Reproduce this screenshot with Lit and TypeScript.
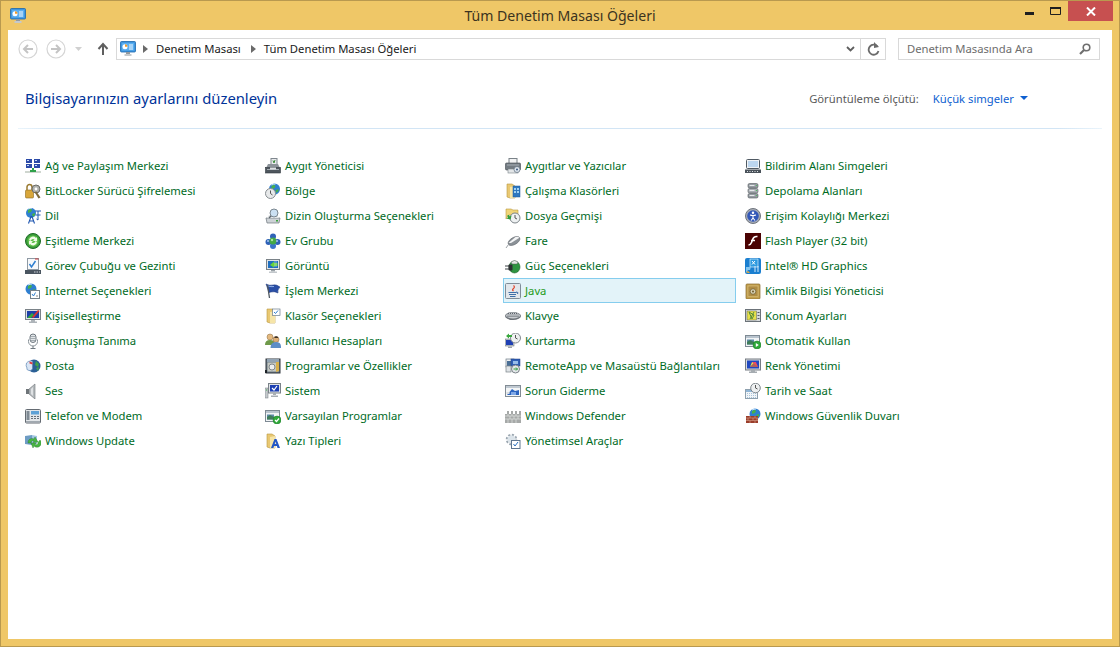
import { LitElement, html, css, svg } from "lit";
import { customElement } from "lit/decorators.js";

const globe = (cx = 8, cy = 6, r = 5) => svg`<circle cx=${cx} cy=${cy} r=${r} fill="#2f7fd0"/><path d="M${cx - 3} ${cy - 3}q3-2 4 0l-1 2-3 1zM${cx + 1} ${cy + 1}l3-1 0 2-2 2z" fill="#46b04a"/><path d="M${cx - 3} ${cy - 4}q2-1 4-1" stroke="#cfe8fb" fill="none"/>`;
const folder = svg`<path d="M2 1h5l3 2v12H5l-3-1z" fill="#e9c872" stroke="#b8973f" stroke-width=".6"/><path d="M5 4l5-1v12H5z" fill="#f6e5a8"/>`;
const monitor = (screen: string) => svg`<rect x="1.5" y="1.5" width="13" height="10" fill="#dfe3e6" stroke="#7a8288"/><rect x="3" y="3" width="10" height="7" fill=${screen}/><path d="M6 12h4v1.5H6z" fill="#9aa2a8"/><path d="M4 13.5h8V15H4z" fill="#c3c8cc"/>`;
const win = svg`<rect x=".5" y="2.5" width="14" height="11" fill="#f2f4f6" stroke="#7e8a94"/><path d="M1 3h13v2H1z" fill="#b9c4ce"/><path d="M2 6.5h7v5H2z" fill="#5d8aa8"/><path d="M2 9l3-2 4 2v2.500H2z" fill="#3f7d5a"/>`;

const icons: Record<string, unknown> = {
  ag: svg`<rect x="1" y="1" width="6" height="4" fill="#2b4aa8"/><rect x="9" y="1" width="6" height="4" fill="#2b4aa8"/><rect x="1" y="6" width="6" height="4" fill="#2b4aa8"/><rect x="9" y="6" width="6" height="4" fill="#2b4aa8"/><path d="M2 2h2v1H2zM10 2h2v1h-2zM2 7h2v1H2zM10 7h2v1h-2z" fill="#c6d8f5"/><path d="M0 13h16v2H0z" fill="#cfd6cf"/><path d="M7 10h2v3H7z M5 12h6v2H5z" fill="#2fa14a"/>`,
  bit: svg`<rect x="0.500" y="7" width="8" height="8" rx="1" fill="#d8a63a" stroke="#8a6a20" stroke-width=".6"/><path d="M2 7V4a2.500 2.500 0 0 1 5 0V7" fill="none" stroke="#9a7a30" stroke-width="1.500"/><circle cx="11" cy="6" r="4" fill="#b0b2ae" stroke="#6d6d68"/><circle cx="11" cy="6" r="1.400" fill="#fff"/><path d="M9.500 9l4 6.500 2-1-4-6z" fill="#7d6a3a"/>`,
  dil: svg`${globe(6, 5, 5)}<path d="M3.500 15.500l2.500-7h1l2.500 7M5 13h3.500" stroke="#1f56b0" stroke-width="1.100" fill="none"/><path d="M10 3h6M13 3v9l-1.500-1M10.500 7h5" stroke="#1f56b0" fill="none"/>`,
  esit: svg`<circle cx="8" cy="8" r="7.500" fill="#3a9d3a" stroke="#1c6b24"/><circle cx="8" cy="8" r="5.500" fill="#62c04c"/><path d="M4 7a4 4 0 0 1 7-2l1-1v4H8l1.500-1.500A2.500 2.500 0 0 0 5.500 8zM12 9a4 4 0 0 1-7 2l-1 1V8h4L6.500 9.500A2.500 2.500 0 0 0 10.500 8z" fill="#f0fbe8"/>`,
  gorev: svg`<rect x="2.500" y=".5" width="11" height="11" fill="#f7f9fb" stroke="#8e99a3"/><path d="M4.500 6l2 3 4-6" stroke="#2f7fd0" stroke-width="1.500" fill="none"/><path d="M10 .5h3.500v1H10z" fill="#c83a3a"/><rect x="0" y="12" width="16" height="4" fill="#4a5560"/><path d="M9 13.500h1.500v1H9zM11.500 13.500H13v1h-1.500zM14 13.500h1v1h-1z" fill="#cdd4da"/>`,
  inet: svg`${globe(6, 6, 5.500)}<rect x="5.500" y="7.500" width="9" height="8" fill="#fff" stroke="#76828c"/><path d="M7 11l1.500 2 2-3.500" stroke="#2f7fd0" fill="none"/><path d="M11 13h2" stroke="#888"/>`,
  kisi: svg`<rect x=".5" y="1.500" width="15" height="10" fill="#dfe3e6" stroke="#7a8288"/><rect x="2" y="3" width="12" height="7" fill="#1f3fa8"/><path d="M2 10l5-5 2 2-3 3z" fill="#32a83c"/><path d="M7 9l6-7 1.500 1-6 7z" fill="#d8352f"/><path d="M6 12h4v1.500H6zM4 13.500h8V15H4z" fill="#aeb4b9"/>`,
  konus: svg`<rect x="5" y="1" width="6" height="8.500" rx="3" fill="#e4e7ea" stroke="#6f7880"/><path d="M5.500 3.500h5M5.500 5.500h5M5.500 7.500h5" stroke="#8a939a" stroke-width=".7"/><path d="M3.500 6.500v2a4.500 4.500 0 0 0 9 0v-2" fill="none" stroke="#8a939a"/><path d="M8 13v2M5.500 15.500h5" stroke="#6f7880"/>`,
  posta: svg`<circle cx="9" cy="8" r="6.500" fill="#2a5f96"/><path d="M11 3l3 3-1 3-3-2zM11 10l3-1-1 4z" fill="#3fa34a"/><path d="M1.500 5q1.500-2 4-2h2v8q-2 3-5 1-1-1-.5-2-1.500-2-.500-5z" fill="#d9e6f5" stroke="#5f86b5" stroke-width=".7"/><path d="M4.500 3.500l3 1v2l-3-1z" fill="#e33b3b"/>`,
  ses: svg`<path d="M1 6h3v5H1z" fill="#6e7478"/><path d="M4 6l6-5v15l-6-5z" fill="#b4b9bc" stroke="#70767a" stroke-width=".6"/><path d="M6 6l2-2v9l-2-2z" fill="#dfe2e4"/>`,
  tel: svg`<rect x=".5" y="1.500" width="15" height="13.500" rx="1" fill="#e3e6e9" stroke="#646b72"/><rect x="1.500" y="3" width="3" height="9" fill="#7f8a94"/><rect x="6" y="3" width="8" height="3.500" fill="#5ea1d6"/><path d="M6 8h2v1H6zM9 8h2v1H9zM12 8h2v1h-2zM6 10h2v1H6zM9 10h2v1H9zM12 10h2v1h-2z" fill="#66707a"/><path d="M1 13h14v1.500H1z" fill="#a1a9b0"/>`,
  wu: svg`<path d="M0 3l7-1v10l-7-1z" fill="#6e9cc4"/><path d="M7 2l5 1v8l-5 1z" fill="#a3c6e2"/><path d="M3 10a4 4 0 0 1 6-4l1-2 3 5-5 .5 1-1.500a2 2 0 0 0-3 2z" fill="#4ab543" stroke="#237a2a" stroke-width=".4"/><path d="M15 7a4 4 0 0 1-6 6l-1 2-2-5 5 0-1 1.500a2 2 0 0 0 3-2z" fill="#4ab543" stroke="#237a2a" stroke-width=".4"/>`,

  aygit: svg`<rect x="6" y="0.500" width="6" height="7" fill="#e8eaec" stroke="#7f878e"/><path d="M8 2.500l1 2.500 1-3" stroke="#3a8a3a" fill="none"/><path d="M3 6h10l2 4H1z" fill="#8b9298"/><rect x=".5" y="9.500" width="15" height="5.500" fill="#4e565d" stroke="#333a40" stroke-width=".6"/><path d="M2 11h12v1H2z" fill="#a5acb2"/><path d="M5 9.500h6v2H5z" fill="#dde0e3"/>`,
  bolge: svg`${globe(9.500, 6, 5.500)}<circle cx="5.500" cy="10.500" r="5" fill="#e7e9ea" stroke="#868c90"/><path d="M5.500 7.500v3l2 1.500" stroke="#555" fill="none"/>`,
  dizin: svg`<path d="M1 10h14l-1 5H2z" fill="#cdd2d6" stroke="#6d757c" stroke-width=".7"/><path d="M2 10l2-3h8l2 3z" fill="#e4e7e9"/><circle cx="9" cy="5" r="4" fill="#cbe0f2" stroke="#7b8790"/><path d="M6 8l-2 2" stroke="#5d666d" stroke-width="1.500"/><rect x="11" y="12" width="2" height="1.500" fill="#3aa03a"/>`,
  ev: svg`<circle cx="3.500" cy="9" r="3" fill="#2f62b8"/><circle cx="12.500" cy="9" r="3" fill="#2f62b8"/><circle cx="8" cy="13" r="3" fill="#3b74cc"/><circle cx="8" cy="3.500" r="3" fill="#2f62b8"/><circle cx="8" cy="8" r="3.500" fill="#43a947"/><circle cx="7" cy="7" r="1.200" fill="#a9e4a0"/><circle cx="3" cy="8" r="1" fill="#a8c6f2"/><circle cx="12" cy="8" r="1" fill="#a8c6f2"/>`,
  goruntu: svg`${monitor("#1f6fc0")}<path d="M3.500 5H7V3.500L11 7 7 9.500V8H3.500z" transform="matrix(-1 0 0 1 16 0)" fill="#69d23b"/><path d="M9 4h3M9 6h3M9 8h3" stroke="#cfe4f7" stroke-width=".6"/>`,
  islem: svg`<path d="M1 1q4 2 7 1t7 2q-3 3-2 6-4-2-7-1l-2 .5z" fill="#2a4fa6" stroke="#1b3478" stroke-width=".5"/><path d="M3 3q3 1 6 .5" stroke="#8fb0ea" fill="none"/><path d="M2.500 2l2 13" stroke="#4c5660" stroke-width="1.300"/>`,
  klasor: svg`${folder}<rect x="7.500" y="1" width="7.500" height="6.500" fill="#fff" stroke="#6a7c8c" stroke-width=".7"/><path d="M9 4l1.500 1.500L13 2.500" stroke="#2f7fd0" fill="none"/>`,
  kull: svg`<circle cx="5" cy="4" r="3" fill="#e4b97f" stroke="#8a6a3f" stroke-width=".5"/><path d="M0 12q0-5 5-5t5 5z" fill="#6f9a4a"/><circle cx="11" cy="6.500" r="3" fill="#dcae76" stroke="#7c5c3a" stroke-width=".5"/><path d="M5.500 15q0-6 5.500-6t5 6z" fill="#5d8ec7"/><path d="M9.500 4q1.500-1.500 3.500 0v1h-3.500z" fill="#3e3024"/>`,
  prog: svg`<rect x="1" y="1" width="14" height="14" fill="#6d7a86" stroke="#30363c"/><path d="M2 1h12v3H2z" fill="#93a4b3"/><rect x="2.500" y="4.500" width="11" height="9" fill="#c6c9c2"/><circle cx="7" cy="9" r="3" fill="#edefef" stroke="#7f868a"/><path d="M11 4h3v9l-3 1z" fill="#d8b04a"/><path d="M0 12h2v3H0z" fill="#1d2226"/>`,
  sistem: svg`<rect x="0" y="5" width="3" height="10" fill="#c5c9cc" stroke="#757c82" stroke-width=".5"/><path d="M1 7h1" stroke="#3bb34a"/><rect x="3.500" y=".5" width="12" height="9.500" fill="#dfe3e6" stroke="#7a8288"/><rect x="5" y="2" width="9" height="6.500" fill="#1c3fb3"/><path d="M7 5l2 2 3-4" stroke="#fff" stroke-width="1.200" fill="none"/><path d="M8 10h3v2H8zM6 12.500h7V14H6z" fill="#a8aeb3"/>`,
  vars: svg`${win}<circle cx="12" cy="12" r="4" fill="#2fa83a" stroke="#1d7a28" stroke-width=".5"/><path d="M10 12l1.500 1.500L14 10.500" stroke="#fff" stroke-width="1.200" fill="none"/>`,
  yazi: svg`${folder}<path d="M6 15l3.500-9h2l3.500 9h-2.500l-.6-2H9l-.6 2zM9.700 11h1.600l-.8-2.500z" fill="#2457c5"/>`,

  yazici: svg`<rect x="4" y="0.500" width="8" height="5" fill="#f2f3f4" stroke="#7a8288"/><rect x=".5" y="5" width="15" height="7" rx="1" fill="#737b82" stroke="#40474d" stroke-width=".6"/><path d="M2 6.500h12v1H2z" fill="#a9b0b6"/><rect x="3" y="11" width="10" height="4" fill="#e3e6e8" stroke="#7a8288" stroke-width=".6"/><circle cx="12" cy="11.500" r="3" fill="#dfe6ee" stroke="#5a6a7a" stroke-width=".7"/><circle cx="12" cy="11.500" r="1" fill="#3c5a80"/>`,
  calisma: svg`${folder}<rect x="8" y="3" width="7" height="11" fill="#2f78c0" stroke="#1d5a9a" stroke-width=".5"/><path d="M9 5h2v2H9zM12 5h2v2h-2zM9 8h2v2H9zM12 8h2v2h-2z" fill="#9fd0f3"/>`,
  dosya: svg`<path d="M1 1h5l2 1h5v5H4l-3 4z" fill="#f0d478" stroke="#b8973f" stroke-width=".6"/><circle cx="10" cy="10" r="5" fill="#eef1f2" stroke="#7c8489"/><path d="M10 7v3l2 1" stroke="#555" fill="none"/><path d="M1 9l3 3 3-3H5V7H3v2z" fill="#2f9c3a" transform="rotate(-30 4 9)"/>`,
  fare: svg`<ellipse cx="9" cy="8" rx="6.500" ry="3.500" transform="rotate(-30 9 8)" fill="#8b9197" stroke="#62686e" stroke-width=".6"/><path d="M3.500 10l7-6q3.500-1 3.500 1l-8 5z" fill="#f3f4f5"/><path d="M3.500 11.500L1 15" stroke="#9aa0a5"/>`,
  guc: svg`<ellipse cx="9.500" cy="9" rx="5.500" ry="6" fill="#2e9440" stroke="#1c5f28" stroke-width=".6"/><path d="M6 4q3.500-3 7 0l-1 2h-5z" fill="#e4e8e4" stroke="#575e58" stroke-width=".5"/><path d="M0 8h5M0 11h5" stroke="#3f4448" stroke-width="1.200"/><rect x="3.500" y="6.500" width="4" height="6" rx="1" fill="#2c3033"/>`,
  java: svg`<rect x=".5" y=".5" width="15" height="15" rx="1" fill="#e2e7ec" stroke="#7f8c98"/><path d="M8.500 2.500q2 1.500-.500 3.500-1 1 .500 2" fill="none" stroke="#e0452c" stroke-width="1.200"/><path d="M3.500 9.500h8M4 11.500h7M5 13.500h5.500" stroke="#3e6fa8"/><path d="M11 9q3 0 1.500 2" stroke="#3e6fa8" fill="none"/>`,
  klavye: svg`<ellipse cx="8" cy="8" rx="8" ry="4" fill="#6d7379"/><ellipse cx="8" cy="7.500" rx="7" ry="3" fill="#c8ccd0"/><path d="M3 5.500h10M2.500 7h11M2.500 8.500h11" stroke="#5c6369" stroke-dasharray="1 1"/>`,
  kurt: svg`<rect x="0" y="6" width="9" height="7" fill="#c4cad0" stroke="#5b646c" stroke-width=".5"/><rect x="1" y="7" width="7" height="5" fill="#1e3fb4"/><path d="M3 13.500h4V15H3z" fill="#9ea4a9"/><circle cx="10.500" cy="5" r="5" fill="#eef0f0" stroke="#838a8f"/><path d="M10.500 2v3l2 1" stroke="#555" fill="none"/><path d="M1 3l3-2.500V2h3v2H4v1.500z" fill="#38a83c"/>`,
  remote: svg`<rect x="1" y="1" width="8" height="8" fill="#eef1f3" stroke="#6d7a86" stroke-width=".7"/><rect x="2" y="3" width="6" height="5" fill="#4a6f96"/><rect x="6" y="1" width="9" height="7" fill="#2f5fb5" stroke="#1d3f86" stroke-width=".5"/><path d="M8 3h5v3H8z" fill="#96bdea"/><rect x="1" y="8" width="5" height="6" fill="#dfe3e6" stroke="#7a8288" stroke-width=".7"/><circle cx="10.500" cy="11" r="4" fill="#e4e7ea" stroke="#7a8288"/><path d="M8.500 11h4M11 9.500l1.500 1.500-1.500 1.500" stroke="#2f9c3a" fill="none"/>`,
  sorun: svg`<rect x=".5" y="2.500" width="15" height="11" fill="#f3f5f6" stroke="#828c95"/><path d="M1 3h14v2H1z" fill="#c0c9d1"/><path d="M2 12l5-6 3 2 4-1v5z" fill="#2c64c0"/><path d="M6 12V9h5v3z" fill="#7fa8e6"/><path d="M1.500 9h3v2h-3z" fill="#d8dce0"/>`,
  def: svg`<path d="M0 6h2V3h2v3h2V3h2v3h2V3h2v3h2V3h2v12H0z" fill="#a6a9a8"/><path d="M0 8h16M0 11h16M3 6v2M7 6v2M11 6v2M5 8v3M9 8v3M13 8v3M3 11v4M7 11v4M11 11v4" stroke="#e0e2e1" stroke-width=".7"/>`,
  yon: svg`<circle cx="6.500" cy="6.500" r="4.500" fill="none" stroke="#9aa6b0" stroke-width="2.500" stroke-dasharray="2 1.500"/><circle cx="6.500" cy="6.500" r="4" fill="#dce4ea"/><rect x="6.500" y="7.500" width="8.500" height="8" fill="#fff" stroke="#5f7690"/><path d="M8.500 11l1.500 2 3-4" stroke="#2a6fc0" fill="none"/>`,

  bildirim: svg`<rect x="1.500" y="1.500" width="13" height="9" rx="1" fill="#f0f3f6" stroke="#505a63"/><rect x="3" y="3" width="10" height="6" fill="#bcd6ef"/><rect x="0" y="11.500" width="16" height="3.500" fill="#4a525a"/><path d="M2 13h1v1H2zM4.500 13h1v1h-1zM7 13h1v1H7zM9.500 13h1v1h-1zM12 13h1v1h-1z" fill="#dde2e6"/>`,
  depo: svg`<rect x="3" y=".5" width="10" height="4.500" rx="1.500" fill="#969ca2" stroke="#50575d" stroke-width=".6"/><rect x="3" y="5.500" width="10" height="4.500" rx="1.500" fill="#a8adb2" stroke="#50575d" stroke-width=".6"/><rect x="3" y="10.500" width="10" height="4.500" rx="1.500" fill="#969ca2" stroke="#50575d" stroke-width=".6"/><path d="M4.500 2.500h5M4.500 7.500h5M4.500 12.500h5" stroke="#e5e8ea"/><path d="M11 2.500h1M11 7.500h1M11 12.500h1" stroke="#4fc060"/>`,
  erisim: svg`<circle cx="8" cy="8" r="7.500" fill="#a8adb6" stroke="#6f757e"/><circle cx="8" cy="8" r="5.800" fill="#3358b8"/><circle cx="8" cy="4.800" r="1.200" fill="#fff"/><path d="M5 7q3 1 6 0M8 7.500V10l-2 2.500M8 10l2 2.500" stroke="#fff" stroke-width="1.100" fill="none"/>`,
  flash: svg`<rect width="16" height="16" fill="#4b0303"/><path d="M12.500 3.500q-4-.5-5 3.500l-1 2.500q-1 2.500-3 2.500M6 7.500h4" stroke="#fff" stroke-width="1.600" fill="none"/>`,
  intel: svg`<rect width="16" height="16" rx="2" fill="#1a7fd0"/><rect x="5" y="1" width="8" height="8" fill="#2d9ae0" stroke="#d7eefc" stroke-width=".7"/><path d="M7 3l3 3.500M10 3L7 6.500" stroke="#fff"/><path d="M9 9h5M9 11h5M9 13h5" stroke="#d6ecfb" stroke-dasharray="2 1"/><path d="M1 9h5l-1 3h-2l-2 3z" fill="#84c5ef"/><path d="M1 14l2 1h2l-2-2z" fill="#e6a93a"/>`,
  kimlik: svg`<rect x="1" y="1" width="14" height="15" rx="1" fill="#c3a04f" stroke="#86692c" stroke-width=".7"/><rect x="3" y="3" width="10" height="10.500" fill="#b08d45" stroke="#e3cc8a" stroke-width=".5"/><circle cx="8" cy="8.500" r="2.800" fill="#d7d0b5" stroke="#6f5c2c" stroke-width=".7"/><circle cx="8" cy="8.500" r="1" fill="#6f5c2c"/>`,
  konum: svg`<rect x=".5" y="1.500" width="15" height="12" fill="#d6d9db" stroke="#6c7379"/><rect x="2" y="3" width="9.500" height="9" fill="#e6e04a" stroke="#60655d" stroke-width=".5"/><path d="M4 4l5 3-2 4zM9 4l-4 7" stroke="#55893a" fill="none"/><path d="M12.500 4h2v1h-2zM12.500 7h2v1h-2zM12.500 10h2v1h-2z" fill="#555c62"/>`,
  oto: svg`${win}<circle cx="12" cy="12" r="4" fill="#2fa83a" stroke="#1d7a28" stroke-width=".5"/><path d="M10.800 10l3 2-3 2z" fill="#fff"/>`,
  renk: svg`<rect x=".5" y="1" width="15" height="11" fill="#d7dade" stroke="#767d84"/><rect x="2" y="2.500" width="12" height="8" fill="#2048c0"/><path d="M5 9l2-5h3z" fill="#e9e34a"/><path d="M7 4h4l2 5z" fill="#e5358a"/><path d="M5 9h8L10 4z" fill="#f06a30" opacity=".7"/><path d="M6 12h4v1.500H6zM4 13.500h8V15H4z" fill="#a6acb1"/>`,
  tarih: svg`<rect x=".5" y="6.500" width="12" height="9" fill="#f2f5f8" stroke="#8ea0ae"/><path d="M1 7h11v2H1z" fill="#8fb5d6"/><path d="M2 10.500h9M2 12.500h9M2 14.500h9" stroke="#a8c4da" stroke-dasharray="1 1"/><circle cx="10.500" cy="5" r="4.800" fill="#eef0f1" stroke="#7e868c"/><path d="M10.500 2v3l2 1" stroke="#555" fill="none"/>`,
  gfw: svg`${globe(10, 6, 5.500)}<path d="M1 8h12v7H1z" fill="#9a3d2a"/><path d="M1 10h12M1 12.500h12M5 8v2M10 8v2M3 10v2.500M8 10v2.500M12 10v2.500M5 12.500V15M10 12.500V15" stroke="#d8a28e" stroke-width=".6"/>`,
  cp: svg`<rect x=".5" y=".5" width="15" height="10.500" rx="1" fill="#3f97e0" stroke="#1a66ac" stroke-width=".8"/><rect x="2" y="2" width="12" height="7.500" fill="#5aaef0"/><circle cx="5" cy="5.700" r="2.500" fill="#fff"/><path d="M5 5.700V3.200a2.500 2.500 0 0 1 2.500 2.500z" fill="#ef9a2a"/><path d="M9 4h4M9 6h4M9 8h4" stroke="#f2f8fd"/><path d="M6 11h4v2H6z" fill="#93999e"/><path d="M4.500 13h7v2h-7z" fill="#c5c9cc"/>`,
};

const columns: [string, string][][] = [
  [["ag", "Ağ ve Paylaşım Merkezi"], ["bit", "BitLocker Sürücü Şifrelemesi"], ["dil", "Dil"], ["esit", "Eşitleme Merkezi"], ["gorev", "Görev Çubuğu ve Gezinti"], ["inet", "Internet Seçenekleri"], ["kisi", "Kişiselleştirme"], ["konus", "Konuşma Tanıma"], ["posta", "Posta"], ["ses", "Ses"], ["tel", "Telefon ve Modem"], ["wu", "Windows Update"]],
  [["aygit", "Aygıt Yöneticisi"], ["bolge", "Bölge"], ["dizin", "Dizin Oluşturma Seçenekleri"], ["ev", "Ev Grubu"], ["goruntu", "Görüntü"], ["islem", "İşlem Merkezi"], ["klasor", "Klasör Seçenekleri"], ["kull", "Kullanıcı Hesapları"], ["prog", "Programlar ve Özellikler"], ["sistem", "Sistem"], ["vars", "Varsayılan Programlar"], ["yazi", "Yazı Tipleri"]],
  [["yazici", "Aygıtlar ve Yazıcılar"], ["calisma", "Çalışma Klasörleri"], ["dosya", "Dosya Geçmişi"], ["fare", "Fare"], ["guc", "Güç Seçenekleri"], ["java", "Java"], ["klavye", "Klavye"], ["kurt", "Kurtarma"], ["remote", "RemoteApp ve Masaüstü Bağlantıları"], ["sorun", "Sorun Giderme"], ["def", "Windows Defender"], ["yon", "Yönetimsel Araçlar"]],
  [["bildirim", "Bildirim Alanı Simgeleri"], ["depo", "Depolama Alanları"], ["erisim", "Erişim Kolaylığı Merkezi"], ["flash", "Flash Player (32 bit)"], ["intel", "Intel® HD Graphics"], ["kimlik", "Kimlik Bilgisi Yöneticisi"], ["konum", "Konum Ayarları"], ["oto", "Otomatik Kullan"], ["renk", "Renk Yönetimi"], ["tarih", "Tarih ve Saat"], ["gfw", "Windows Güvenlik Duvarı"]],
];

const ico = (name: string) => html`<svg class="ico" viewBox="0 0 16 16" width="16" height="16">${icons[name]}</svg>`;

@customElement("app-root")
export class AppRoot extends LitElement {
  static styles = css`
    :host { display: block; }
    * { box-sizing: border-box; }
    .window { width: 1120px; height: 647px; background: #efc767; border: 1px solid #b9994f; padding: 0 7px 7px; display: flex; flex-direction: column; font-family: "Noto Sans", "Open Sans", sans-serif; font-size: 11.25px; overflow: hidden; }
    .titlebar { height: 29px; flex: none; display: grid; grid-template-columns: 1fr auto 1fr; }
    .tl { display: flex; align-items: center; padding: 0 0 0 2px; }
    .title { font-size: 14.1px; color: #3b3320; line-height: 29px; }
    .ctrls { display: flex; justify-content: flex-end; align-items: flex-start; margin-right: -1px; }
    .ctrl { width: 26px; height: 20px; display: flex; align-items: center; justify-content: center; }
    .min { padding-top: 5px; }
    .close { width: 45px; background: #c75050; }
    .client { flex: 1; background: #fff; display: flex; flex-direction: column; min-height: 0; }
    .nav { height: 30px; flex: none; display: flex; align-items: center; padding: 8px 12px 0 10px; }
    .navbtn { width: 20px; height: 20px; flex: none; }
    .gap8 { margin-left: 8px; }
    .drop { margin-left: 9px; width: 7px; height: 4px; flex: none; }
    .up { margin-left: 14px; width: 14px; height: 14px; flex: none; }
    .addr { margin-left: 6px; flex: none; width: 770px; height: 22px; border: 1px solid #d9d9d9; display: flex; align-items: center; color: #1a1a1a; }
    .addr .ico { margin-left: 3px; }
    .crumb { margin-left: 7px; width: 5px; height: 8px; flex: none; }
    .crumbtext { margin-left: 8px; white-space: nowrap; padding-bottom: 1px; }
    .crumb2 { margin-left: 10px; width: 5px; height: 8px; flex: none; }
    .spacer { flex: 1; }
    .chev { width: 9px; height: 6px; margin-right: 5px; flex: none; }
    .ref { width: 25px; height: 20px; border-left: 1px solid #d9d9d9; display: flex; align-items: center; justify-content: center; flex: none; }
    .search { margin-left: 12px; flex: none; width: 202px; height: 22px; border: 1px solid #d9d9d9; display: flex; align-items: center; justify-content: space-between; padding: 0 8px; color: #6d6d6d; }
    .search span { padding-bottom: 1px; }
    .head { height: 68px; flex: none; padding: 8px 0 0 17px; display: flex; align-items: center; justify-content: space-between; }
    .h1 { font-size: 14.8px; color: #003399; white-space: nowrap; }
    .view { display: flex; align-items: center; padding-right: 84px; color: #5a5a5a; white-space: nowrap; }
    .viewlink { color: #0e5fd0; margin-left: 14px; }
    .tri { margin-left: 6px; width: 8px; height: 4px; }
    .rule { height: 1px; flex: none; margin: 0 10px; background: linear-gradient(to right, #eaf4fb, #d2e5f5 4%, #d2e5f5 96%, #eaf4fb); }
    .grid { margin: 24px 0 0 15px; display: grid; grid-auto-flow: column; grid-template-rows: repeat(12, 25px); grid-template-columns: repeat(4, 240px); }
    .item { display: flex; align-items: center; width: 233px; height: 25px; border: 1px solid transparent; padding-left: 1px; color: #006b1f; white-space: nowrap; }
    .item .ico { flex: none; margin-right: 4px; }
    .sel { background: #e3f3f9; border-color: #85cdee; color: #1e9a20; }
  `;

  render() {
    return html`<div class="window">
      <div class="titlebar">
        <div class="tl">${ico("cp")}</div>
        <div class="title">Tüm Denetim Masası Öğeleri</div>
        <div class="ctrls">
          <div class="ctrl min"><svg width="9" height="3" viewBox="0 0 9 3"><rect width="9" height="3" fill="#1f1f1f"/></svg></div>
          <div class="ctrl"><svg width="11" height="8" viewBox="0 0 11 8"><path d="M.5 .5h10v7H.5z" fill="none" stroke="#1f1f1f"/><path d="M0 0h11v2H0z" fill="#1f1f1f"/></svg></div>
          <div class="ctrl close"><svg width="10" height="9" viewBox="0 0 10 9"><path d="M1 .5l8 8M9 .5l-8 8" stroke="#fff" stroke-width="2"/></svg></div>
        </div>
      </div>
      <div class="client">
        <div class="nav">
          <svg class="navbtn" viewBox="0 0 20 20"><circle cx="10" cy="10" r="9" fill="#fff" stroke="#d5d5d5" stroke-width="1.200"/><path d="M15 10H6M10 6l-4 4 4 4" stroke="#c4c4c4" stroke-width="2" fill="none"/></svg>
          <svg class="navbtn gap8" viewBox="0 0 20 20"><circle cx="10" cy="10" r="9" fill="#fff" stroke="#d5d5d5" stroke-width="1.200"/><path d="M5 10h9M10 6l4 4-4 4" stroke="#c4c4c4" stroke-width="2" fill="none"/></svg>
          <svg class="drop" viewBox="0 0 7 4"><path d="M0 0h7L3.500 4z" fill="#d0d0d0"/></svg>
          <svg class="up" viewBox="0 0 14 14"><path d="M7 13V3M2.500 7L7 2l4.500 5" stroke="#5f5f5f" stroke-width="2" fill="none"/></svg>
          <div class="addr">
            ${ico("cp")}
            <svg class="crumb" viewBox="0 0 5 8"><path d="M0 0l5 4-5 4z" fill="#6a6a6a"/></svg>
            <span class="crumbtext">Denetim Masası</span>
            <svg class="crumb2" viewBox="0 0 5 8"><path d="M0 0l5 4-5 4z" fill="#6a6a6a"/></svg>
            <span class="crumbtext">Tüm Denetim Masası Öğeleri</span>
            <span class="spacer"></span>
            <svg class="chev" viewBox="0 0 9 6"><path d="M1 1l3.500 3.500L8 1" stroke="#5f5f5f" stroke-width="1.800" fill="none"/></svg>
            <div class="ref"><svg width="13" height="14" viewBox="0 0 13 14"><path d="M10.500 4.500A5 5 0 1 0 11.500 9" stroke="#6b6b6b" stroke-width="1.800" fill="none"/><path d="M7 0v6l5-1z" fill="#6b6b6b"/></svg></div>
          </div>
          <div class="search">
            <span>Denetim Masasında Ara</span>
            <svg width="12" height="12" viewBox="0 0 12 12"><circle cx="7.500" cy="4.500" r="3.300" stroke="#6e6e6e" stroke-width="1.600" fill="none"/><path d="M5 7l-4 4" stroke="#6e6e6e" stroke-width="2.200"/></svg>
          </div>
        </div>
        <div class="head">
          <div class="h1">Bilgisayarınızın ayarlarını düzenleyin</div>
          <div class="view">Görüntüleme ölçütü:<span class="viewlink">Küçük simgeler</span><svg class="tri" viewBox="0 0 8 4"><path d="M0 0h8L4 4z" fill="#0e5fd0"/></svg></div>
        </div>
        <div class="rule"></div>
        <div class="grid">
          ${columns.flat().map(([i, t]) => html`<div class="item ${i === "java" ? "sel" : ""}">${ico(i)}<span>${t}</span></div>`)}
        </div>
      </div>
    </div>`;
  }
}
